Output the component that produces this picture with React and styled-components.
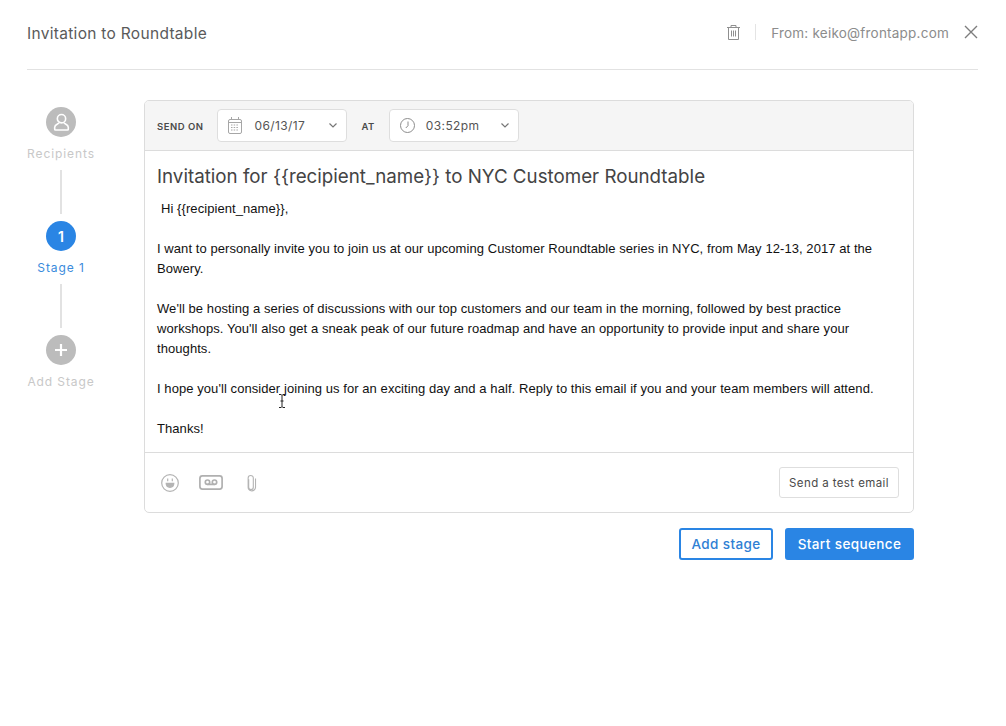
import React from 'react'
import styled, { createGlobalStyle } from 'styled-components'

const Global = createGlobalStyle`
  html, body { margin: 0; padding: 0; background: #fff; }
  body { font-family: Inter, "Liberation Sans", sans-serif; }
`

const Page = styled.div`
  width: 1006px;
  height: 726px;
  box-sizing: border-box;
  padding: 0 28px 0 27px;
  overflow: hidden;
`

const Header = styled.header`
  box-sizing: border-box;
  border-bottom: 1px solid #e2e2e2;
  height: 70px;
  padding-bottom: 5px;
  display: flex;
  align-items: center;
  justify-content: space-between;
`

const Title = styled.h1`
  margin: 2px 0 0;
  font-size: 15.5px;
  font-weight: 400;
  letter-spacing: 0.3px;
  color: #5a5a5a;
`

const HeaderRight = styled.div`
  display: flex;
  align-items: center;
`

const Divider = styled.span`
  width: 1px;
  height: 16px;
  background: #e4e4e4;
  margin: 0 15px 0 15px;
`

const From = styled.span`
  margin-top: 2px;
  font-size: 13.5px;
  letter-spacing: 0.22px;
  color: #8c8c8c;
  margin-right: 15px;
`

const Main = styled.div`
  display: flex;
  padding-top: 30px;
`

const Steps = styled.nav`
  width: 68px;
  margin-right: 49px;
  display: flex;
  flex-direction: column;
  align-items: center;
  padding-top: 7px;
`

const Dot = styled.div`
  width: 30px;
  height: 30px;
  border-radius: 50%;
  background: ${props => (props.active ? '#2a85e4' : '#bcbcbc')};
  color: #fff;
  display: flex;
  align-items: center;
  justify-content: center;
  font-size: 14px;
  font-weight: 600;
`

const StepLabel = styled.div`
  margin-top: 9px;
  height: 16px;
  line-height: 16px;
  font-size: 12px;
  letter-spacing: 0.9px;
  white-space: nowrap;
  color: ${props => (props.active ? '#3a8bdc' : '#c8c8c8')};
`

const Connector = styled.div`
  width: 2px;
  height: 44px;
  background: #e2e2e2;
  margin: 8px 0 7px;
`

const Column = styled.div`
  width: 770px;
`

const Card = styled.section`
  box-sizing: border-box;
  width: 770px;
  height: 413px;
  border: 1px solid #dcdcdc;
  border-radius: 5px;
  display: flex;
  flex-direction: column;
  overflow: hidden;
`

const Toolbar = styled.div`
  height: 50px;
  flex: none;
  box-sizing: border-box;
  background: #f5f5f5;
  border-bottom: 1px solid #dcdcdc;
  display: flex;
  align-items: center;
  padding-left: 12px;
`

const ToolLabel = styled.span`
  margin-top: 2px;
  font-size: 9.5px;
  font-weight: 600;
  letter-spacing: 0.5px;
  color: #4a4a4a;
  margin-right: ${props => props.gap}px;
`

const Select = styled.div`
  box-sizing: border-box;
  width: 130px;
  height: 33px;
  background: #fff;
  border: 1px solid #dedede;
  border-radius: 4px;
  display: flex;
  align-items: center;
  padding: 0 9px 0 10px;
  margin-right: ${props => props.gap || 0}px;
  font-size: 12px;
  letter-spacing: 0.4px;
  color: #555;
`

const SelectText = styled.span`
  flex: 1;
  margin-left: ${props => props.gap}px;
`

const Body = styled.div`
  flex: 1;
  min-height: 0;
  padding: 14px 12px 0 12px;
`

const Subject = styled.h2`
  margin: 0 0 10px;
  font-size: 18.75px;
  line-height: 24px;
  font-weight: 400;
  color: #444;
`

const Message = styled.div`
  font-family: "Liberation Sans", Arial, sans-serif;
  font-size: 13px;
  letter-spacing: 0.07px;
  line-height: 20px;
  color: #111;
`

const Para = styled.p`
  margin: 0 0 20px;
  padding-left: ${props => props.indent || 0}px;

  &:last-child {
    margin-bottom: 0;
  }
`

const Footer = styled.div`
  height: 60px;
  flex: none;
  box-sizing: border-box;
  border-top: 1px solid #dcdcdc;
  display: flex;
  align-items: center;
  padding: 0 14px 0 16px;
`

const FooterIcon = styled.span`
  display: flex;
  margin-right: ${props => props.gap}px;
`

const TestButton = styled.button`
  margin-left: auto;
  width: 120px;
  height: 31px;
  background: #fff;
  border: 1px solid #dedede;
  border-radius: 3px;
  font-family: inherit;
  font-size: 11.5px;
  letter-spacing: 0.4px;
  color: #4a4a4a;
  padding: 1px 0 0;
`

const Actions = styled.div`
  display: flex;
  justify-content: flex-end;
  gap: 12px;
  margin-top: 15px;
`

const ActionButton = styled.button`
  box-sizing: border-box;
  height: 32px;
  width: ${props => props.width}px;
  border: 2px solid #2a85e4;
  border-radius: 3px;
  background: ${props => (props.primary ? '#2a85e4' : '#fff')};
  color: ${props => (props.primary ? '#fff' : '#2f80d4')};
  font-family: inherit;
  font-size: 13.5px;
  font-weight: 500;
  letter-spacing: 0.4px;
  padding: 0;
`

const CaretCursor = styled.svg`
  position: absolute;
  left: 278px;
  top: 394px;
`

const Chevron = () => (
  <svg width="8" height="5" viewBox="0 0 8 5" fill="none" stroke="#777" strokeWidth="1.2">
    <path d="M.5.5L4 4 7.5.5" />
  </svg>
)

const CalendarIcon = () => (
  <svg width="14" height="17" viewBox="0 0 14 17" fill="none" stroke="#a6a6a6">
    <rect x="0.5" y="2.5" width="13" height="14" rx="1.5" />
    <path d="M3.5 0v3M10.5 0v3M1 5.5h12" />
    <path d="M3 8h8M3 10.5h8M3 13h8" strokeDasharray="1.5 1.2" />
  </svg>
)

const ClockIcon = () => (
  <svg width="15" height="15" viewBox="0 0 15 15" fill="none" stroke="#8c8c8c">
    <circle cx="7.5" cy="7.5" r="7" />
    <path d="M8 3.5v4.2L5.8 10" />
  </svg>
)

const TrashIcon = () => (
  <svg width="13" height="15" viewBox="0 0 13 15" fill="none" stroke="#8f8f8f">
    <path d="M0 2.5h13M4 2.5V.5h5v2M1.5 2.5v12h10v-12M4.5 5.5v6M6.5 5.5v6M8.5 5.5v6" />
  </svg>
)

const CloseIcon = () => (
  <svg width="14" height="14" viewBox="0 0 14 14" fill="none" stroke="#7d7d7d" strokeWidth="1.4">
    <path d="M1 1l12 12M13 1L1 13" />
  </svg>
)

const PersonIcon = () => (
  <svg width="17" height="19" viewBox="0 0 18 20" fill="none" stroke="#fff" strokeWidth="1.7">
    <circle cx="9" cy="6" r="4.4" />
    <path d="M6.5 10c0 1.5-4.7 2-4.7 5v2.2c0 .5.3.8.8.8h12.8c.5 0 .8-.3.8-.8V15c0-3-4.7-3.5-4.7-5" />
  </svg>
)

const PlusIcon = () => (
  <svg width="12" height="12" viewBox="0 0 12 12" fill="none" stroke="#fff" strokeWidth="2.2">
    <path d="M6 0v12M0 6h12" />
  </svg>
)

const SmileIcon = () => (
  <svg width="18" height="18" viewBox="0 0 18 18" fill="none" stroke="#b4b4b4" strokeWidth="1.2">
    <circle cx="9" cy="9" r="8.3" />
    <path d="M6.7 4.6v2.6M11.3 4.6v2.6" />
    <path d="M5.2 9.3h7.6c0 2.4-1.6 4-3.8 4s-3.8-1.6-3.8-4z" fill="#b4b4b4" />
  </svg>
)

const VoicemailIcon = () => (
  <svg width="24" height="15" viewBox="0 0 24 15" fill="none" stroke="#b0b0b0" strokeWidth="1.7">
    <rect x="0.9" y="0.9" width="22.2" height="13.2" rx="2.5" />
    <circle cx="8.5" cy="7.2" r="2.2" />
    <circle cx="15.5" cy="7.2" r="2.2" />
    <path d="M8.5 9.4h7" />
  </svg>
)

const ClipIcon = () => (
  <svg width="12" height="18" viewBox="0 0 13 18" fill="none" stroke="#b4b4b4" strokeWidth="1.2">
    <path d="M4 5v8.5a2.5 2.5 0 0 0 5 0V3.6a2.8 2.8 0 0 0-5.6 0v9.6a4 4 0 0 0 3.1 4.2 4 4 0 0 0 4.9-4V4" />
  </svg>
)

const TextCursor = () => (
  <CaretCursor width="8" height="14" viewBox="0 0 8 14" fill="none" stroke="#222">
    <path d="M1 .5h2.2L4 1.5 4.8.5H7M4 1.5v11M1 13.5h2.2l.8-1 .8 1H7M2.5 7h3" />
  </CaretCursor>
)

export default function App() {
  return (
    <Page>
      <Global />
      <Header>
        <Title>Invitation to Roundtable</Title>
        <HeaderRight>
          <TrashIcon />
          <Divider />
          <From>From: keiko@frontapp.com</From>
          <CloseIcon />
        </HeaderRight>
      </Header>
      <Main>
        <Steps>
          <Dot><PersonIcon /></Dot>
          <StepLabel>Recipients</StepLabel>
          <Connector />
          <Dot active>1</Dot>
          <StepLabel active>Stage 1</StepLabel>
          <Connector />
          <Dot><PlusIcon /></Dot>
          <StepLabel>Add Stage</StepLabel>
        </Steps>
        <Column>
          <Card>
            <Toolbar>
              <ToolLabel gap={14}>SEND ON</ToolLabel>
              <Select gap={14}>
                <CalendarIcon />
                <SelectText gap={12}>06/13/17</SelectText>
                <Chevron />
              </Select>
              <ToolLabel gap={14}>AT</ToolLabel>
              <Select>
                <ClockIcon />
                <SelectText gap={11}>03:52pm</SelectText>
                <Chevron />
              </Select>
            </Toolbar>
            <Body>
              <Subject>Invitation for {'{{recipient_name}}'} to NYC Customer Roundtable</Subject>
              <Message>
                <Para indent={4}>Hi {'{{recipient_name}}'},</Para>
                <Para>I want to personally invite you to join us at our upcoming Customer Roundtable series in NYC, from May 12-13, 2017 at the Bowery.</Para>
                <Para>We'll be hosting a series of discussions with our top customers and our team in the morning, followed by best practice workshops. You'll also get a sneak peak of our future roadmap and have an opportunity to provide input and share your thoughts.</Para>
                <Para>I hope you'll consider joining us for an exciting day and a half. Reply to this email if you and your team members will attend.</Para>
                <Para>Thanks!</Para>
              </Message>
            </Body>
            <Footer>
              <FooterIcon gap={20}><SmileIcon /></FooterIcon>
              <FooterIcon gap={22}><VoicemailIcon /></FooterIcon>
              <FooterIcon gap={0}><ClipIcon /></FooterIcon>
              <TestButton>Send a test email</TestButton>
            </Footer>
          </Card>
          <Actions>
            <ActionButton width={94}>Add stage</ActionButton>
            <ActionButton primary width={129}>Start sequence</ActionButton>
          </Actions>
        </Column>
      </Main>
      <TextCursor />
    </Page>
  )
}
